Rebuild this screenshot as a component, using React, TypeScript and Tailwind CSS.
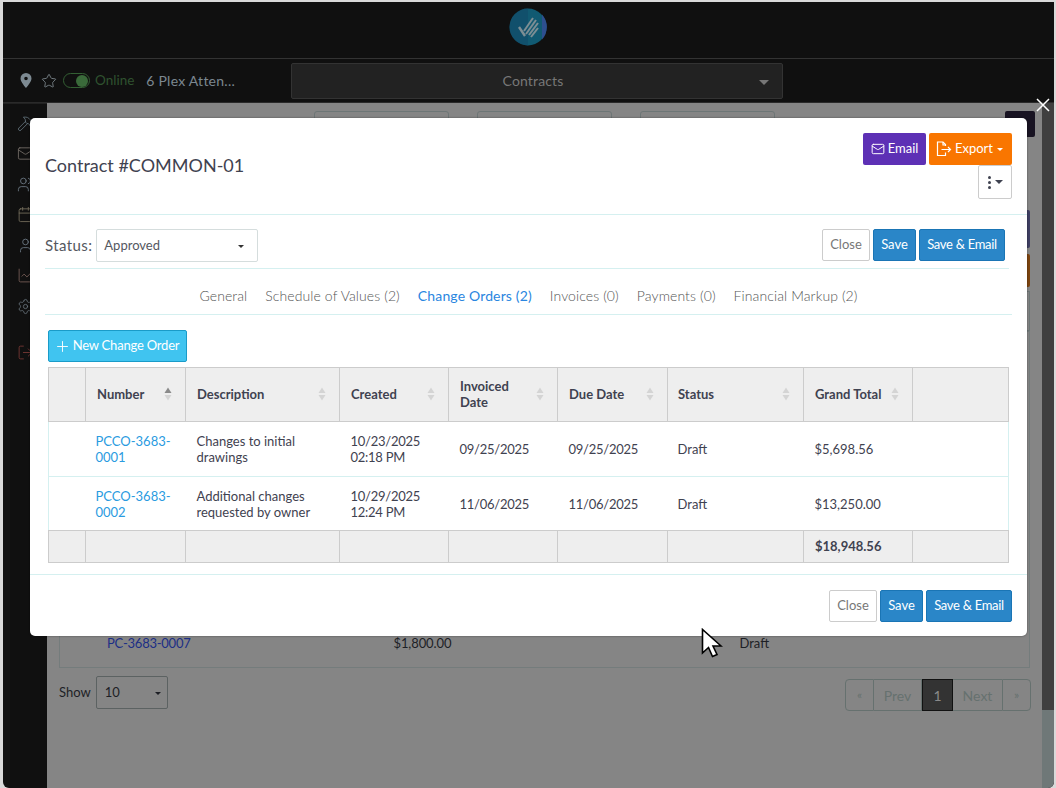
import { Calendar, Hammer, LineChart, LogOut, Mail, Plus, Settings, Star, User, Users } from 'lucide-react'

const font = { fontFamily: 'Lato, "Noto Sans", sans-serif' }

const columns = [37, 100, 154, 109, 109, 110, 136, 109, 96]

const headers = [
  { label: '', sort: false },
  { label: 'Number', sort: true, active: true },
  { label: 'Description', sort: true },
  { label: 'Created', sort: true },
  { label: 'Invoiced Date', sort: true },
  { label: 'Due Date', sort: true },
  { label: 'Status', sort: true },
  { label: 'Grand Total', sort: true },
  { label: '', sort: false },
]

const rows = [
  {
    number: 'PCCO-3683-0001',
    description: 'Changes to initial drawings',
    created: ['10/23/2025', '02:18 PM'],
    invoiced: '09/25/2025',
    due: '09/25/2025',
    status: 'Draft',
    total: '$5,698.56',
  },
  {
    number: 'PCCO-3683-0002',
    description: 'Additional changes requested by owner',
    created: ['10/29/2025', '12:24 PM'],
    invoiced: '11/06/2025',
    due: '11/06/2025',
    status: 'Draft',
    total: '$13,250.00',
  },
]

const tabs = [
  { label: 'General' },
  { label: 'Schedule of Values (2)' },
  { label: 'Change Orders (2)', active: true },
  { label: 'Invoices (0)' },
  { label: 'Payments (0)' },
  { label: 'Financial Markup (2)' },
]

function Caret({ className }: { className: string }) {
  return <span className={`inline-block h-0 w-0 border-x-transparent ${className}`} />
}

function SortIcon({ active }: { active?: boolean }) {
  return (
    <svg width="8" height="14" viewBox="0 0 8 14" className="shrink-0">
      <path d="M4 0.5 7.5 6H0.5Z" fill={active ? '#8a8a8a' : '#d4d4d4'} />
      <path d="M4 13.5 0.5 8H7.5Z" fill="#d4d4d4" />
    </svg>
  )
}

function Logo() {
  return (
    <svg width="38" height="38" viewBox="0 0 38 38">
      <circle cx="19" cy="19" r="18.5" fill="#115a72" />
      <path d="M19 .5A18.5 18.5 0 0 0 19 37.500Z" fill="#124a69" opacity="0.6" />
      <path d="M33 6.500A18.500 18.500 0 0 1 33 31.500Z" fill="#2d4f8f" />
      <g stroke="#7d8e94" strokeWidth="2" strokeLinecap="butt" fill="none">
        <path d="M10 19l6 9" strokeWidth="2.400" />
        <path d="M15 23 24 10" />
        <path d="M17 26 27 12" />
        <path d="M20 27 29 15" />
        <path d="M22 29 29 20" />
      </g>
    </svg>
  )
}

function Cursor() {
  return (
    <svg width="22" height="30" viewBox="0 0 22 30">
      <path d="M1.500 1.500V25L7.500 19.500 11.500 28.500 16 26.500 12 18H20Z" fill="#fff" stroke="#000" strokeWidth="1.600" />
    </svg>
  )
}

function ActionButtons() {
  return (
    <div className="flex gap-[3px] text-[13px]">
      <button className="h-[32px] w-[48px] rounded-[2px] border border-[#cccccc] bg-white text-[#777777]">Close</button>
      <button className="h-[32px] w-[43px] rounded-[2px] border border-[#1a75b5] bg-[#2a86c8] text-white">Save</button>
      <button className="h-[32px] w-[86px] rounded-[2px] border border-[#1a75b5] bg-[#2a86c8] tracking-[-0.3px] text-white">Save &amp; Email</button>
    </div>
  )
}

function Modal() {
  return (
    <div className="absolute left-[30px] top-[118px] flex h-[518px] w-[997px] flex-col rounded-[5px] bg-white text-[#3f4250] shadow-[0_0_2px_rgba(0,0,0,0.5)]">
      <div className="flex h-[97px] shrink-0 items-start justify-between border-b border-[#d5f0f0] pl-[15px] pr-[15px] pt-[15px]">
        <h2 className="mt-[20px] text-[18px] leading-[24px] text-[#3f4250]">Contract #COMMON-01</h2>
        <div className="flex flex-col items-end">
          <div className="flex gap-[3px] text-[13px] text-white">
            <button className="flex h-[32px] w-[63px] items-center justify-center gap-[3px] rounded-[2px] bg-[#5d30b5]">
              <Mail size={14} strokeWidth={1.700} />
              Email
            </button>
            <button className="flex h-[32px] w-[83px] items-center justify-center gap-[3px] rounded-[2px] bg-[#f97600] pr-[3px]">
              <svg width="17" height="16" viewBox="0 0 17 16" fill="none" stroke="#fff" strokeWidth="1.200">
                <path d="M10.500 5V3.500L8 1H2.500V14.500H10.500V11.500" />
                <path d="M8 1V4H10.500" />
                <path d="M6.500 8.500H15.500M13 6l2.500 2.500L13 11" />
              </svg>
              Export
              <Caret className="ml-[1px] border-x-[3px] border-t-[3px] border-t-white" />
            </button>
          </div>
          <button className="flex h-[34px] w-[34px] items-center justify-center gap-[4px] rounded-[2px] border border-[#cccccc] bg-white">
            <span className="flex flex-col gap-[2px]">
              <span className="h-[3px] w-[3px] rounded-full bg-[#3f4250]" />
              <span className="h-[3px] w-[3px] rounded-full bg-[#3f4250]" />
              <span className="h-[3px] w-[3px] rounded-full bg-[#3f4250]" />
            </span>
            <Caret className="border-x-[4px] border-t-[4px] border-t-[#3f4250]" />
          </button>
        </div>
      </div>

      <div className="shrink-0 pl-[15px] pr-[18px]">
        <div className="flex h-[54px] items-start justify-between border-b border-[#d5f0f0] pt-[14px]">
          <div className="flex items-center gap-[4px]">
            <span className="text-[15px] tracking-[0.4px] text-[#555860]">Status:</span>
            <div className="flex h-[33px] w-[162px] items-center justify-between rounded-[2px] border border-[#d5dddd] pl-[7px] pr-[13px] text-[13px] text-[#55585f]">
              Approved
              <Caret className="mt-[1px] border-x-[3px] border-t-[3px] border-t-[#333333]" />
            </div>
          </div>
          <div className="pr-[4px]">
            <ActionButtons />
          </div>
        </div>
      </div>

      <div className="mx-[15px] flex h-[46px] shrink-0 items-center justify-center gap-[18px] border-b border-[#d5f0f0] pt-[8px] text-[14px] tracking-[0.1px]">
        {tabs.map((tab) => (
          <span key={tab.label} className={tab.active ? 'tracking-[0.15px] text-[#2a86e0]' : 'font-light text-[#555555]'}>
            {tab.label}
          </span>
        ))}
      </div>

      <div className="flex-1 pl-[18px] pr-[18px] pt-[15px]">
        <button className="flex h-[32px] w-[139px] items-center justify-center gap-[2px] rounded-[2px] border border-[#1a9bc8] bg-[#40c4f0] pr-[2px] text-[13px] tracking-[-0.2px] text-white">
          <Plus size={17} strokeWidth={1.300} />
          New Change Order
        </button>
        <table className="mt-[5px] table-fixed border-collapse text-[13px]" style={{ width: 960 }}>
          <colgroup>
            {columns.map((w, i) => (
              <col key={i} style={{ width: w }} />
            ))}
          </colgroup>
          <thead>
            <tr className="h-[54px] bg-[#eeeeee]">
              {headers.map((h, i) => (
                <th key={i} className={`border border-[#cccccc] pb-[2px] pr-[13px] text-left font-bold leading-[16px] text-[#3f4250] ${h.label === 'Status' ? 'pl-[10px]' : 'pl-[11px]'}`}>
                  <div className="flex items-center justify-between">
                    <span className={h.label === 'Invoiced Date' ? 'w-[60px]' : ''}>{h.label}</span>
                    {h.sort && <SortIcon active={h.active} />}
                  </div>
                </th>
              ))}
            </tr>
          </thead>
          <tbody>
            {rows.map((row, i) => (
              <tr key={row.number} className={`border border-[#d5f0f0] leading-[16px] ${i === 0 ? 'h-[55px]' : 'h-[54px]'}`}>
                <td />
                <td className="pl-[10px] pr-[11px] text-[#2a9bdf]">{row.number}</td>
                <td className="px-[11px]">{row.description}</td>
                <td className="px-[11px] tracking-[-0.25px]">
                  {row.created[0]}
                  <br />
                  {row.created[1]}
                </td>
                <td className="px-[11px] tracking-[-0.25px]">{row.invoiced}</td>
                <td className="px-[11px] tracking-[-0.25px]">{row.due}</td>
                <td className="px-[10px]">{row.status}</td>
                <td className="px-[11px]">{row.total}</td>
                <td />
              </tr>
            ))}
            <tr className="h-[32px] bg-[#eeeeee]">
              {columns.map((_, i) => (
                <td key={i} className="border border-[#cccccc] px-[11px] pt-[1px] font-bold text-[#3f4250]">
                  {i === 7 ? '$18,948.56' : ''}
                </td>
              ))}
            </tr>
          </tbody>
        </table>
      </div>

      <div className="flex h-[62px] shrink-0 items-center justify-end border-t border-[#d5f0f0] pr-[15px]">
        <ActionButtons />
      </div>
    </div>
  )
}

function TopBars() {
  return (
    <>
      <div className="flex h-[57px] shrink-0 items-center justify-center border-b border-[#333333] pb-[6px] pr-[1px]">
        <Logo />
      </div>
      <div className="flex h-[44px] shrink-0 items-center border-b border-[#2a2a2a] pl-[17px] text-[14px]">
        <svg width="12" height="15" viewBox="0 0 12 15" className="shrink-0">
          <path fillRule="evenodd" d="M6 0a5.500 5.500 0 0 1 5.500 5.500C11.500 9 6 15 6 15S.5 9 .5 5.500A5.500 5.500 0 0 1 6 0Zm0 3.700a1.800 1.800 0 1 0 0 3.600 1.800 1.800 0 0 0 0-3.600Z" fill="#7d8a92" />
        </svg>
        <Star size={16} strokeWidth={1.300} className="ml-[9px] text-[#808a90]" />
        <div className="ml-[6px] flex h-[15px] w-[27px] items-center justify-end rounded-full border border-[#335f33] pr-[1px]">
          <span className="h-[12px] w-[12px] rounded-full bg-[#3a6a3a]" />
        </div>
        <span className="ml-[5px] text-[13.500px] text-[#2f522f]">Online</span>
        <span className="ml-[12px] tracking-[0.25px] text-[#7c8890]">6 Plex Atten...</span>
        <div className="relative ml-[56px] flex h-[36px] w-[492px] items-center justify-center rounded-[2px] border border-[#333333] bg-[#222222] pr-[8px] tracking-[0.15px] text-[#777777]">
          Contracts
          <Caret className="absolute right-[13px] top-[16px] border-x-[5px] border-t-[5px] border-t-[#777777]" />
        </div>
      </div>
    </>
  )
}

function Sidebar() {
  const icons = [
    { Icon: Hammer, color: 'text-[#63737c]' },
    { Icon: Mail, color: 'text-[#77706a]' },
    { Icon: Users, color: 'text-[#6f7c88]' },
    { Icon: Calendar, color: 'text-[#77705f]' },
    { Icon: User, color: 'text-[#6f7c88]' },
    { Icon: LineChart, color: 'text-[#7a5f58]' },
    { Icon: Settings, color: 'text-[#667078]' },
  ]
  return (
    <div className="flex w-[44px] shrink-0 flex-col items-center border-t border-[#222222] pt-[4px]">
      {icons.map(({ Icon, color }, i) => (
        <div key={i} className="flex h-[30.500px] items-center justify-center">
          <Icon size={17} strokeWidth={1.200} className={color} />
        </div>
      ))}
      <LogOut size={17} strokeWidth={1.200} className="mt-[22px] text-[#7c3a36]" />
    </div>
  )
}

function BackgroundPage() {
  return (
    <div className="flex min-w-0 flex-1 flex-col bg-[#858585] pl-[12px] pr-[12px] pt-[8px] text-[13px] text-[#1d1f25]">
      <div className="flex h-[26px] shrink-0 items-start">
        <div className="ml-[255px] flex gap-[28px]">
          <div className="h-[12px] w-[135px] rounded-t-[3px] border border-[#6d7676]" />
          <div className="h-[12px] w-[135px] rounded-t-[3px] border border-[#6d7676]" />
          <div className="h-[12px] w-[135px] rounded-t-[3px] border border-[#6d7676]" />
        </div>
        <div className="ml-auto -mr-[5px] h-[26px] w-[30px] rounded-[2px] bg-[#181322]" />
      </div>
      <div className="mt-[73px] h-[38px] w-[60px] shrink-0 self-end rounded-[2px] bg-[#3f3f63]" />
      <div className="mt-[6px] h-[33px] w-[60px] shrink-0 self-end rounded-[2px] bg-[#7c4410]" />
      <div className="mt-[4px] h-[40px] w-[60px] shrink-0 self-end border border-[#6d7676]" />
      <div className="flex h-[337px] shrink-0 items-end border border-[#747c7c] pb-[14px]">
        <div className="ml-[47px] tracking-[-0.25px] text-[#1c2f86]">PC-3683-0007</div>
        <div className="ml-[203px] tracking-[-0.1px] text-[#1d1f25]">$1,800.00</div>
        <div className="ml-[288px] text-[#1d1f25]">Draft</div>
      </div>
      <div className="mt-[8px] flex items-start justify-between">
        <div className="flex items-center gap-[5px]">
          <span>Show</span>
          <div className="flex h-[33px] w-[72px] items-center justify-between rounded-[2px] border border-[#5c6262] pl-[8px] pr-[6px]">
            10
            <Caret className="mt-[2px] border-x-[3px] border-t-[3px] border-t-[#1d1f25]" />
          </div>
        </div>
        <div className="-mr-[1px] mt-[3px] flex h-[32px] items-stretch text-[14px] text-[#66716f]">
          <span className="flex w-[29px] items-center justify-center rounded-l-[4px] border border-[#66716f] text-[12px]">«</span>
          <span className="flex w-[48px] items-center justify-center border-y border-r border-[#66716f]">Prev</span>
          <span className="flex w-[31px] items-center justify-center border border-[#111111] bg-[#333333] text-[#8a8a8a]">1</span>
          <span className="flex w-[49px] items-center justify-center border-y border-[#66716f]">Next</span>
          <span className="flex w-[29px] items-center justify-center rounded-r-[4px] border border-[#66716f] text-[12px]">»</span>
        </div>
      </div>
    </div>
  )
}

export default function App() {
  return (
    <div className="relative h-[788px] w-[1056px] overflow-hidden bg-[#d9d9d9] pl-[3px] pr-[2px] pt-[2px]" style={font}>
      <div className="flex h-full flex-col overflow-hidden rounded-bl-[6px] rounded-br-[6px] bg-[#101010]">
        <TopBars />
        <div className="flex min-h-0 flex-1">
          <Sidebar />
          <BackgroundPage />
          <div className="flex w-[12px] shrink-0 flex-col bg-[#6f7878]">
            <div className="h-[607px] bg-[#3f3f3f]" />
          </div>
        </div>
      </div>
      <Modal />
      <svg width="14" height="14" viewBox="0 0 14 14" className="absolute left-[1036px] top-[98px]" fill="none" stroke="#fff" strokeWidth="1.500">
        <path d="M1 1 13 13M13 1 1 13" />
      </svg>
      <div className="absolute left-[701px] top-[628px]">
        <Cursor />
      </div>
    </div>
  )
}
